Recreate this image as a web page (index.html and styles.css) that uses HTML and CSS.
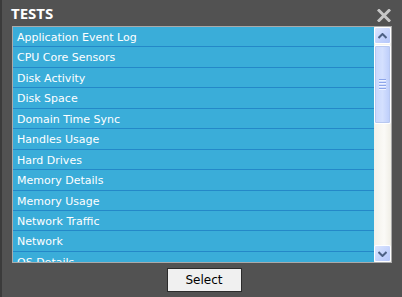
FILE: index.html
```html
<!DOCTYPE html>
<html>
<head>
<meta charset="utf-8">
<link rel="stylesheet" href="styles.css">
</head>
<body>
<div class="dialog">
  <div class="header">
    <span class="title">TESTS</span>
    <span class="close" aria-label="Close">
      <svg width="14" height="13" viewBox="0 0 14 13"><path d="M2 1.5 L12 11.5 M12 1.5 L2 11.5" stroke="#c6c6c6" stroke-width="3" stroke-linecap="square"/></svg>
    </span>
  </div>
  <div class="listbox">
    <div class="items">
      <div class="item">Application Event Log</div>
      <div class="item">CPU Core Sensors</div>
      <div class="item">Disk Activity</div>
      <div class="item">Disk Space</div>
      <div class="item">Domain Time Sync</div>
      <div class="item">Handles Usage</div>
      <div class="item">Hard Drives</div>
      <div class="item">Memory Details</div>
      <div class="item">Memory Usage</div>
      <div class="item">Network Traffic</div>
      <div class="item">Network</div>
      <div class="item">OS Details</div>
    </div>
    <div class="scrollbar">
      <div class="sbtn">
        <svg width="9" height="6" viewBox="0 0 9 6"><path d="M0.5 5 L4.5 1 L8.5 5" fill="none" stroke="#4d6185" stroke-width="2"/></svg>
      </div>
      <div class="thumb">
        <div class="grip"><i></i><i></i><i></i><i></i></div>
      </div>
      <div class="track"></div>
      <div class="sbtn">
        <svg width="9" height="6" viewBox="0 0 9 6"><path d="M0.5 1 L4.5 5 L8.5 1" fill="none" stroke="#4d6185" stroke-width="2"/></svg>
      </div>
    </div>
  </div>
  <div class="footer">
    <button class="select">Select</button>
  </div>
</div>
</body>
</html>
```
FILE: styles.css
```css
html, body {
  margin: 0;
  padding: 0;
  background: #525252;
}
.dialog {
  width: 400px;
  height: 297px;
  border-left: 2px solid #3b3b3b;
  box-sizing: border-box;
  display: flex;
  flex-direction: column;
  font-family: "DejaVu Sans", sans-serif;
}
.header {
  height: 26px;
  display: flex;
  align-items: flex-start;
  justify-content: space-between;
  padding-left: 9px;
  padding-right: 9px;
  box-sizing: border-box;
}
.title {
  color: #ffffff;
  font-family: "Open Sans", sans-serif;
  font-weight: bold;
  font-size: 15px;
  line-height: 18px;
  margin-top: 4px;
}
.close {
  display: block;
  margin-top: 9px;
  line-height: 0;
}
.listbox {
  margin-left: 10px;
  width: 380px;
  height: 237px;
  box-sizing: border-box;
  border: 1px solid #aaaaaa;
  display: flex;
  overflow: hidden;
  background: #3aadd9;
}
.items {
  flex: 1;
  overflow: hidden;
}
.item {
  height: 19.45px;
  border-bottom: 1px solid #2488c8;
  color: #ffffff;
  font-size: 11px;
  line-height: 21px;
  padding-left: 4px;
  white-space: nowrap;
}
.scrollbar {
  width: 17px;
  display: flex;
  flex-direction: column;
  background: #f4f3ee;
}
.sbtn {
  height: 17px;
  box-sizing: border-box;
  border: 1px solid #ffffff;
  border-radius: 2px;
  background: linear-gradient(135deg, #dde6fe 0%, #c3d2fc 60%, #b5c7fa 100%);
  display: flex;
  align-items: center;
  justify-content: center;
  flex: none;
}
.thumb {
  height: 79px;
  margin-top: 1px;
  box-sizing: border-box;
  border: 1px solid #ffffff;
  border-radius: 2px;
  background: linear-gradient(90deg, #c9d7fd 0%, #d4e0fe 50%, #bccdfb 100%);
  display: flex;
  align-items: center;
  justify-content: center;
  flex: none;
  box-shadow: 0 0 0 1px #b8c8f0 inset;
}
.grip {
  display: flex;
  flex-direction: column;
  gap: 1px;
}
.grip i {
  display: block;
  width: 7px;
  height: 1px;
  background: #8ea6ea;
  border-bottom: 1px solid #eef3ff;
}
.track {
  flex: 1;
  background: linear-gradient(90deg, #f3f1ea 0%, #fbfaf7 60%, #f0eee6 100%);
}
.footer {
  display: flex;
  justify-content: center;
  padding-top: 5px;
  padding-left: 6px;
}
.select {
  width: 75px;
  height: 24px;
  box-sizing: border-box;
  border: 1px solid #2c2c2c;
  background: #f0f0f0;
  font-family: "DejaVu Sans", sans-serif;
  font-size: 12px;
  color: #000000;
  padding: 0;
  border-radius: 0;
}
```
